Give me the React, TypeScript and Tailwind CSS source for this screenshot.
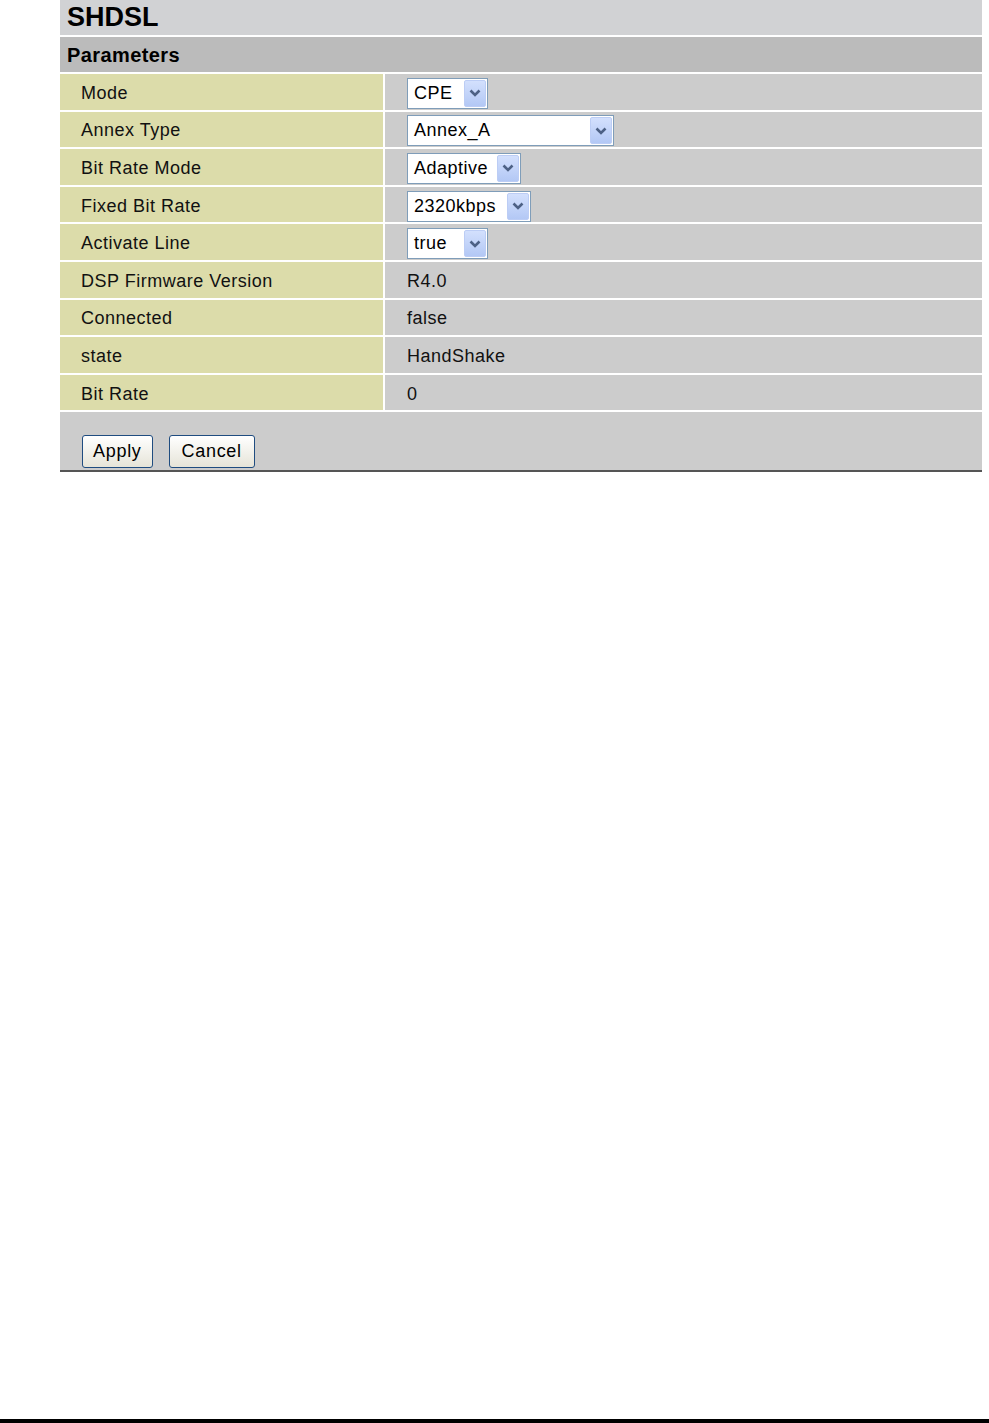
import React from "react";

type Row = { label: string; select?: { value: string; width: number }; text?: string };

const rows: Row[] = [
  { label: "Mode", select: { value: "CPE", width: 81 } },
  { label: "Annex Type", select: { value: "Annex_A", width: 207 } },
  { label: "Bit Rate Mode", select: { value: "Adaptive", width: 114 } },
  { label: "Fixed Bit Rate", select: { value: "2320kbps", width: 124 } },
  { label: "Activate Line", select: { value: "true", width: 81 } },
  { label: "DSP Firmware Version", text: "R4.0" },
  { label: "Connected", text: "false" },
  { label: "state", text: "HandShake" },
  { label: "Bit Rate", text: "0" },
];

const Chevron = () => (
  <svg width="14" height="10" viewBox="0 0 14 10">
    <path d="M2.5 2.5 L7 7 L11.5 2.5" fill="none" stroke="#4d6185" strokeWidth="2.6" />
  </svg>
);

// fake XP style dropdown
const Select = ({ value, width }: { value: string; width: number }) => (
  <div
    className="flex h-[31px] items-center justify-between border border-[#7f9db9] bg-white pl-[6px] pr-[1px]"
    style={{ width }}
  >
    <span className="text-[18px] tracking-[0.5px] text-black">{value}</span>
    <div className="flex h-[27px] w-[22px] items-center justify-center rounded-[2px] border border-[#bccdf5] bg-gradient-to-b from-[#d3e0fd] to-[#b3c8f5]">
      <Chevron />
    </div>
  </div>
);

const Button = ({ children, className }: { children: React.ReactNode; className: string }) => (
  <button
    className={
      "h-[33px] rounded-[3px] border border-[#1f4c80] bg-gradient-to-b from-white to-[#e6e4d8] text-[18px] tracking-[0.7px] text-black " +
      className
    }
  >
    {children}
  </button>
);

export default function App() {
  return (
    <div className="flex min-h-[1423px] flex-col bg-white font-['Liberation_Sans',Arial,sans-serif]">
      <div className="ml-[60px] flex w-[922px] flex-col gap-[2px] bg-white">
        <div className="flex h-[35px] items-center bg-[#d1d2d4] pl-[7px]">
          <span className="text-[27px] font-bold leading-none text-black">SHDSL</span>
        </div>
        <div className="flex h-[35px] items-center bg-[#bbbbbb] pl-[7px] pt-[1px]">
          <span className="text-[20px] font-bold tracking-[0.4px] text-black">Parameters</span>
        </div>
        {rows.map((r) => (
          <div key={r.label} className="flex h-[35.6px] gap-[2px]">
            <div className="flex w-[323px] items-center bg-[#dcdcaa] pl-[21px] pt-[3px]">
              <span className="text-[18px] tracking-[0.5px] text-[#111]">{r.label}</span>
            </div>
            <div className="flex flex-1 items-center bg-[#cccccc] pl-[22px] pt-[3px]">
              {r.select ? (
                <Select value={r.select.value} width={r.select.width} />
              ) : (
                <span className="text-[18px] tracking-[0.5px] text-[#111]">{r.text}</span>
              )}
            </div>
          </div>
        ))}
        <div className="flex h-[60px] items-end gap-[16px] border-b-2 border-[#555] bg-[#cccccc] pb-[2px] pl-[22px]">
          <Button className="px-[10px]">Apply</Button>
          <Button className="px-[12px]">Cancel</Button>
        </div>
      </div>
      <div className="mt-auto h-[4px] w-full bg-black" />
    </div>
  );
}
